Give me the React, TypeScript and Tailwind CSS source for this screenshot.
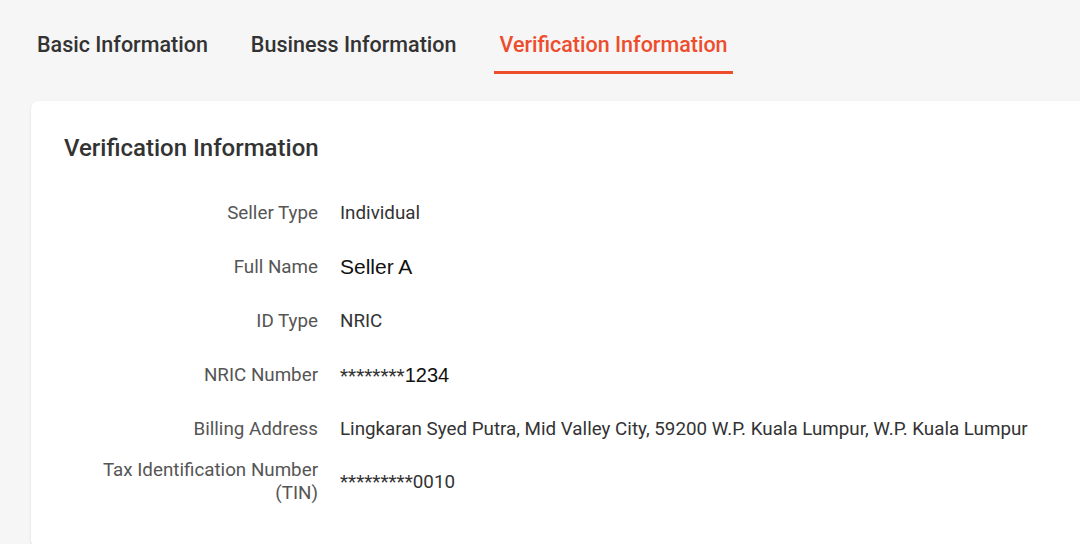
const rows: { label: string; value: React.ReactNode }[] = [
  { label: "Seller Type", value: "Individual" },
  {
    label: "Full Name",
    value: <span className="font-['Liberation_Sans',Arial,sans-serif] text-[21px] text-[#111]">Seller A</span>,
  },
  { label: "ID Type", value: "NRIC" },
  {
    label: "NRIC Number",
    value: (
      <span>
        <span>********</span>
        <span className="font-['Liberation_Sans',Arial,sans-serif] text-[20px] text-[#111]">1234</span>
      </span>
    ),
  },
  {
    label: "Billing Address",
    value: "Lingkaran Syed Putra, Mid Valley City, 59200 W.P. Kuala Lumpur, W.P. Kuala Lumpur",
  },
  { label: "Tax Identification Number (TIN)", value: "*********0010" },
];

const tabs = ["Basic Information", "Business Information", "Verification Information"];

export default function App() {
  return (
    <div className="w-[1080px] h-[544px] overflow-hidden bg-[#f6f6f6] font-['Roboto',sans-serif]">
      <div className="flex gap-[33px] pl-[32px] pt-[31px]">
        {tabs.map((t, i) => {
          const active = i === 2;
          return (
            <div
              key={t}
              className={
                active
                  ? "px-[5px] pb-[12px] border-b-[3px] border-[#ee4d2d] text-[21.5px] leading-[28px] font-medium text-[#ee4d2d]"
                  : "px-[5px] pb-[12px] border-b-[3px] border-transparent text-[21.5px] leading-[28px] font-medium text-[#333]"
              }
            >
              {t}
            </div>
          );
        })}
      </div>

      <div className="ml-[31px] mt-[27px] w-[1100px] rounded-lg bg-white shadow-sm pt-[32px] pb-[40px] pl-[33px]">
        <h2 className="text-[24px] leading-[30px] font-medium text-[#333]">Verification Information</h2>
        <div className="mt-[23px] flex flex-col">
          {rows.map((r, i) => (
            <div key={r.label} className={i === 5 ? "flex items-center min-h-[52px]" : "flex items-center min-h-[54px]"}>
              <div className="w-[254px] shrink-0 pl-[30px] text-right text-[18.8px] leading-[23px] text-[#555]">
                {r.label}
              </div>
              <div className="ml-[22px] text-[18.8px] leading-[24px] text-[#333]">{r.value}</div>
            </div>
          ))}
        </div>
      </div>
    </div>
  );
}
